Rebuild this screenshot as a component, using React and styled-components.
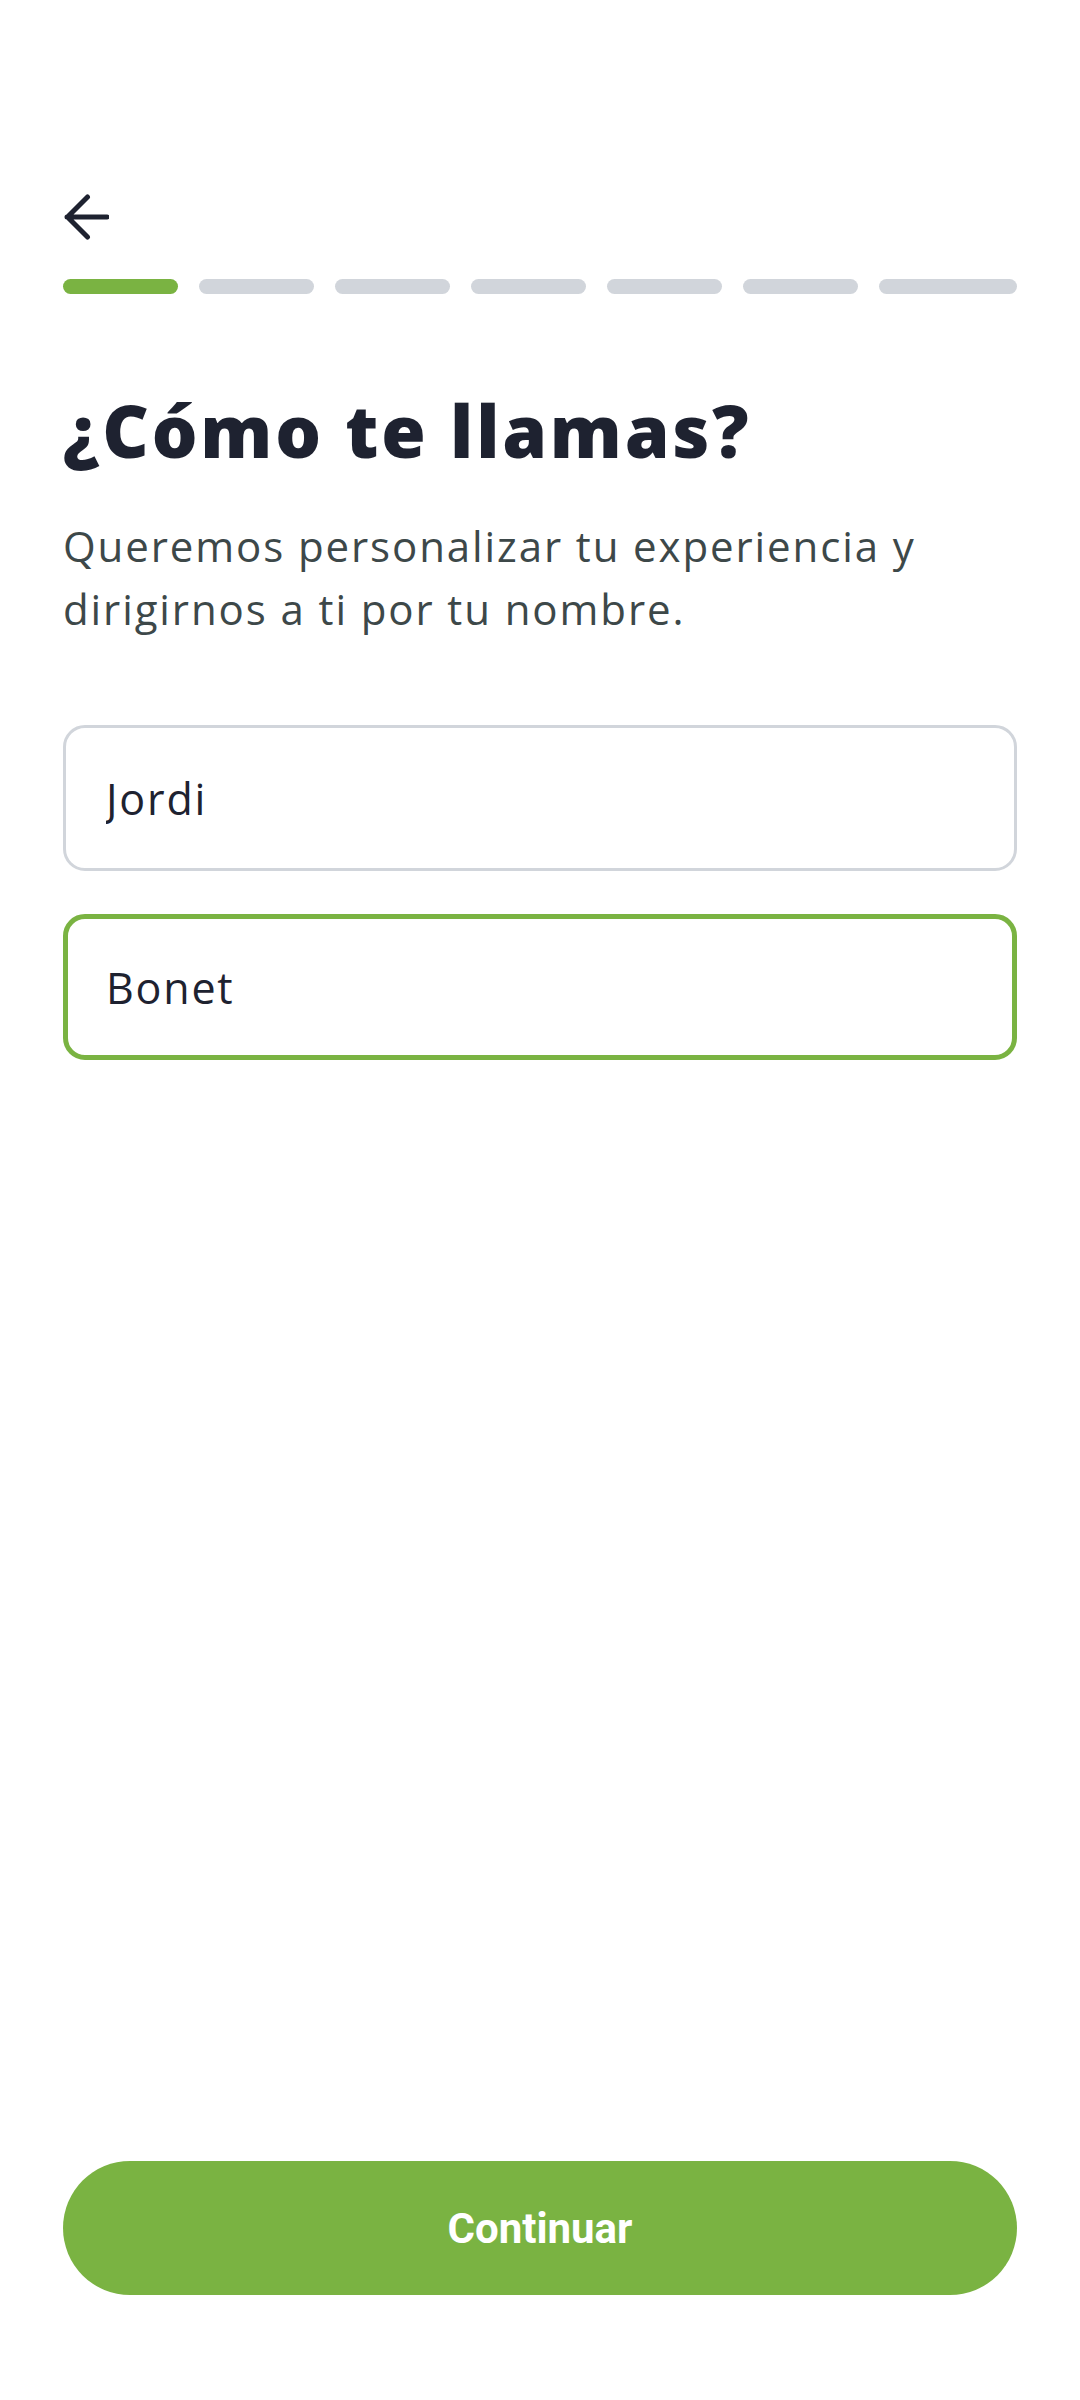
import React from 'react';
import styled, { createGlobalStyle } from 'styled-components';

const GlobalStyle = createGlobalStyle`
    * {
        box-sizing: border-box;
    }
    body {
        margin: 0;
        background: #ffffff;
        font-family: "Open Sans", "Noto Sans", sans-serif;
    }
`;

const Page = styled.div`
    width: 1080px;
    min-height: 2400px;
    display: flex;
    flex-direction: column;
    padding: 194px 63px 105px;
    background: #ffffff;
`;

const BackButton = styled.button`
    width: 46px;
    height: 46px;
    padding: 0;
    border: none;
    background: none;
    color: #1e2230;
    cursor: pointer;
    display: flex;
`;

const Progress = styled.div`
    display: flex;
    gap: 21px;
    margin-top: 39px;
`;

const Segment = styled.div`
    height: 15px;
    border-radius: 8px;
    background-color: ${(p) => (p.$active ? '#7ab342' : '#d1d5db')};
    width: 115px;
    flex: ${(p) => (p.$last ? '1' : '0 0 115px')};
`;

const Title = styled.h1`
    margin: 93px 0 0;
    font-family: "Open Sans", sans-serif;
    font-weight: 800;
    font-size: 72px;
    line-height: 86px;
    letter-spacing: 2.8px;
    color: #1e2230;
`;

const Subtitle = styled.p`
    margin: 41px 0 0;
    font-family: "Open Sans", sans-serif;
    font-weight: 400;
    font-size: 42px;
    line-height: 63px;
    letter-spacing: 1.9px;
    color: #3d4849;
`;

const Fields = styled.div`
    display: flex;
    flex-direction: column;
    gap: 43px;
    margin-top: 85px;
`;

const Input = styled.input`
    width: 100%;
    height: 146px;
    border: ${(p) => (p.$focused ? '5px solid #7ab342' : '3px solid #d1d5db')};
    padding: 0 0 0 ${(p) => (p.$focused ? '38px' : '40px')};
    border-radius: 22px;
    background: #ffffff;
    font-family: "Open Sans", sans-serif;
    font-size: 43px;
    letter-spacing: 1.8px;
    color: #1e2230;
    outline: none;
`;

const Spacer = styled.div`
    flex: 1;
`;

const PrimaryButton = styled.button`
    height: 134px;
    width: 100%;
    border: none;
    border-radius: 67px;
    background-color: #7ab342;
    color: #ffffff;
    font-family: Roboto, "Liberation Sans", sans-serif;
    font-weight: 700;
    font-size: 42px;
    cursor: pointer;
`;

function ArrowBack() {
    return (
        <svg width="46" height="46" viewBox="0 0 46 46" fill="none">
            <path
                d="M44 23H4 M24.5 3 L4.5 23 L24.5 43"
                stroke="currentColor"
                strokeWidth="5"
                strokeLinecap="round"
                strokeLinejoin="round"
            />
        </svg>
    );
}

const STEPS = 7;

export default function App() {
    return (
        <>
            <GlobalStyle />
            <Page>
                <BackButton aria-label="Volver">
                    <ArrowBack />
                </BackButton>

                <Progress>
                    {Array.from({ length: STEPS }).map((_, i) => (
                        <Segment key={i} $active={i === 0} $last={i === STEPS - 1} />
                    ))}
                </Progress>

                <Title>¿Cómo te llamas?</Title>
                <Subtitle>
                    Queremos personalizar tu experiencia y
                    <br />
                    dirigirnos a ti por tu nombre.
                </Subtitle>

                <Fields>
                    <Input defaultValue="Jordi" readOnly />
                    <Input defaultValue="Bonet" readOnly $focused />
                </Fields>

                <Spacer />

                <PrimaryButton>Continuar</PrimaryButton>
            </Page>
        </>
    );
}
